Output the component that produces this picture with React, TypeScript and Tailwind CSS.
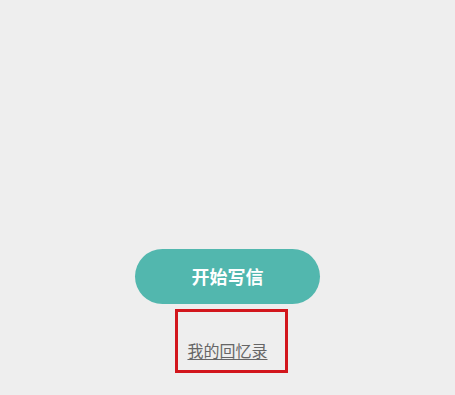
const App = () => {
  return (
    <div
      className="flex h-[395px] w-[455px] flex-col items-center justify-end bg-[#eeeeee] pb-[22px]"
      style={{ fontFamily: '"Noto Sans CJK SC", "Noto Sans", sans-serif' }}
    >
      <button className="flex h-[55px] w-[185px] items-center justify-center rounded-full bg-[#52b7ae] text-[18px] font-semibold text-white">
        开始写信
      </button>

      <div className="mt-[5px] ml-[8px] flex h-[64px] w-[113px] items-end justify-center border-[3px] border-[#d2161c] pr-[8px] pb-[9px]">
        <a className="text-[16px] leading-[22px] text-[#666666] underline underline-offset-2">
          我的回忆录
        </a>
      </div>
    </div>
  )
}

export default App
